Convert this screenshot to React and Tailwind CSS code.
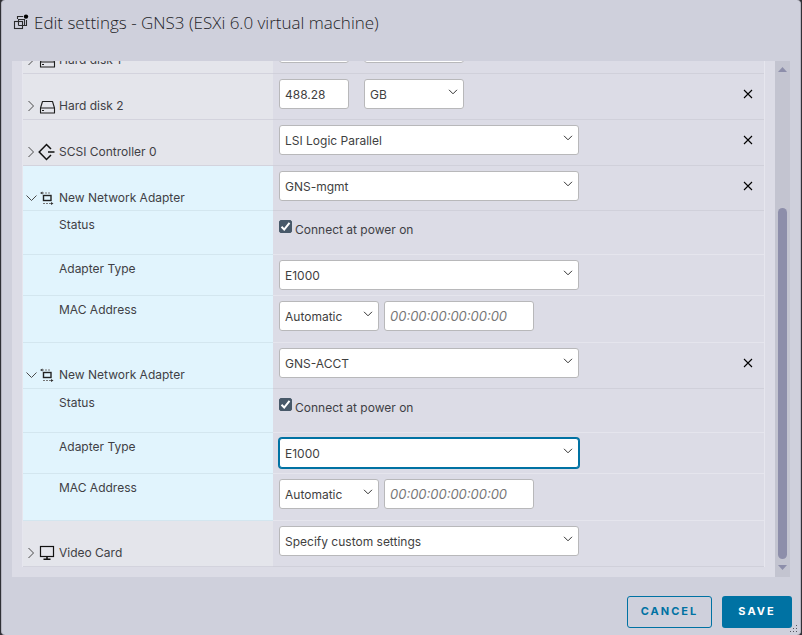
import React, { useState } from "react";

function Chevron({ className }) {
  return (
    <svg className={className} width="10" height="6" viewBox="0 0 10 6" fill="none" stroke="currentColor" strokeWidth="1">
      <path d="M1 0.8 L5 4.8 L9 0.8" />
    </svg>
  );
}

function Caret({ open }) {
  return (
    <svg width="12" height="12" viewBox="0 0 12 12" fill="none" stroke="#4a4a4a" strokeWidth="1">
      <path d={open ? "M0.5 3.5 L5.5 8.5 L10.5 3.5" : "M2.5 1 L7.5 6 L2.5 11"} />
    </svg>
  );
}

function DiskIcon() {
  return (
    <svg width="18" height="16" viewBox="0 0 18 16" fill="none" stroke="#1d1d1d" strokeWidth="1.1">
      <path d="M2.5 10 L4.5 3.5 H14.5 L16.5 10 V15 H2.5 Z M2.5 10 H16.5 M4 12.5 H6" strokeLinejoin="round" />
    </svg>
  );
}

function ScsiIcon() {
  return (
    <svg width="18" height="18" viewBox="0 0 18 18" fill="none" stroke="#111" strokeWidth="1.5">
      <path d="M13 6 L8.5 1.5 L1.2 9 L8.5 16.5 L13 12" />
      <path d="M10 9 H16.5" />
    </svg>
  );
}

function NetworkIcon() {
  return (
    <svg width="16" height="14" viewBox="0 0 16 14" fill="none" stroke="#222" strokeWidth="1">
      <rect x="4.5" y="4.5" width="7.5" height="5" strokeWidth="1.4" />
      <path d="M3 2 H5 M6 2 H8 M9 2 H11" stroke="#777" />
      <path d="M4 12.5 H6 M7 12.5 H9 M10 12.5 H13" stroke="#777" />
      <path d="M3.5 0.5 L1 2 L3.5 3.5 Z M12 11 L14.5 12.5 L12 14 Z" fill="#333" stroke="none" />
    </svg>
  );
}

function MonitorIcon() {
  return (
    <svg width="16" height="16" viewBox="0 0 16 16" fill="none" stroke="#111" strokeWidth="1.2">
      <rect x="1.5" y="1.5" width="13" height="10" />
      <path d="M8 11.5 V14 M4.5 14.3 H11.5" strokeWidth="1.6" />
    </svg>
  );
}

function VmIcon() {
  return (
    <svg width="16" height="16" viewBox="0 0 16 16" fill="none" stroke="#2b2b2b" strokeWidth="1.1">
      <path d="M4.5 5 V2.5 H10 M13.5 6 V11.5 H10" />
      <rect x="1.5" y="7.5" width="8" height="7" />
      <path d="M5.5 11.5 V5.5 H11.5 V11.5 H5.5" />
      <circle cx="13" cy="2.6" r="2.2" fill="#000" stroke="none" />
    </svg>
  );
}

function Select({ label, value, options = [], width, focused }) {
  return (
    <div className={`relative max-w-full ${width}`}>
      <select
        aria-label={label}
        defaultValue={value}
        className={`block h-[30px] w-full appearance-none rounded-[3px] border bg-white pt-px pl-[5px] pr-6 text-[#3f3f3f] outline-none ${
          focused ? "border-[#0072a3] ring-1 ring-[#0072a3]" : "border-[#b8b8ba]"
        }`}
      >
        <option>{value}</option>
        {options.map((o) => (
          <option key={o}>{o}</option>
        ))}
      </select>
      <Chevron className="pointer-events-none absolute right-[6px] top-[10px] text-[#333]" />
    </div>
  );
}

const inputStyle = "h-[30px] rounded-[3px] border border-[#b8b8ba] bg-white px-[5px] text-[#3f3f3f] outline-none";

function Row({ height, icon, label, open, active, child, removable, children }) {
  return (
    <div className={`flex ${height}`}>
      <div
        className={`flex w-[250px] shrink-0 items-start border-b ${
          active ? "border-[#d3e6ef] bg-[#e1f4fd]" : "border-[#d3d3dd] bg-[#e4e5eb]"
        } ${child ? "pt-[5px] pl-9" : "pt-[23px] pl-[3px]"}`}
      >
        {child ? (
          <span className="leading-[17px]">{label}</span>
        ) : (
          <button type="button" aria-expanded={!!open} className="flex h-[17px] items-center text-left leading-[17px]">
            <Caret open={open} />
            <span className="mr-[3px] flex w-[18px] items-center justify-center">{icon}</span>
            <span>{label}</span>
          </button>
        )}
      </div>
      <div
        className={`flex min-w-0 flex-1 items-start gap-[5px] border-b pt-[5px] pl-[6px] pr-[11px] ${
          child ? "border-[#e5e5ed]" : "border-[#d0d0da]"
        }`}
      >
        {children}
        {removable && (
          <button type="button" aria-label={`Remove ${label}`} className="mt-[10px] ml-auto text-black">
            <svg className="block" width="10" height="10" viewBox="0 0 10 10" stroke="currentColor" strokeWidth="1.1">
              <path d="M1 1 L9 9 M9 1 L1 9" />
            </svg>
          </button>
        )}
      </div>
    </div>
  );
}

function DiskRow({ label, size }) {
  return (
    <Row height="h-[46px]" icon={<DiskIcon />} label={label} removable>
      <input aria-label={`${label} size`} defaultValue={size} className={`mr-[10px] w-[70px] ${inputStyle}`} />
      <Select label={`${label} unit`} value="GB" options={["MB", "TB"]} width="w-[100px]" />
    </Row>
  );
}

function AdapterRows({ network, focused, tall }) {
  const [connected, setConnected] = useState(true);
  return (
    <>
      <Row height={tall ? "h-[46px]" : "h-[45px]"} icon={<NetworkIcon />} label="New Network Adapter" open active removable>
        <Select label="Network" value={network} width="w-[300px]" />
      </Row>
      <Row height="h-[44px]" label="Status" active child>
        <label className="mt-1 flex items-start gap-[3px]">
          <span className="relative block size-[13px]">
            <input
              type="checkbox"
              checked={connected}
              onChange={(e) => setConnected(e.target.checked)}
              className="peer block size-[13px] appearance-none rounded-[2px] border border-[#485969] checked:bg-[#485969]"
            />
            <svg className="pointer-events-none absolute inset-0 hidden peer-checked:block" width="13" height="13" viewBox="0 0 13 13" fill="none" stroke="#fff" strokeWidth="2">
              <path d="M2.5 6.8 L5.2 9.5 L10.5 2.8" />
            </svg>
          </span>
          <span className="mt-px leading-[17px]">Connect at power on</span>
        </label>
      </Row>
      <Row height="h-[41px]" label="Adapter Type" active child>
        <Select label="Adapter Type" value="E1000" options={["E1000e", "VMXNET 3"]} width="w-[300px]" focused={focused} />
      </Row>
      <Row height="h-[47px]" label="MAC Address" active child>
        <Select label="MAC Address mode" value="Automatic" options={["Manual"]} width="w-[100px]" />
        <input
          aria-label="MAC Address"
          placeholder="00:00:00:00:00:00"
          className={`w-[150px] text-[13px] placeholder:italic placeholder:text-[#777] ${inputStyle}`}
        />
      </Row>
    </>
  );
}

export default function App() {
  return (
    <div className="min-h-screen bg-[#303036] px-px font-['Inter',sans-serif] text-[12px] text-[#3f3f45]">
      <div className="relative flex min-h-screen flex-col rounded-[4px] border-x border-[#b4b4c0] bg-[#cfd0dc]">
        <header className="flex h-[61px] items-start gap-[5px] pt-[11px] pl-[11px]">
          <span className="mt-[3px]">
            <VmIcon />
          </span>
          <h1 className="font-['Open_Sans',sans-serif] text-[17px] leading-6 font-light text-[#242428]">
            Edit settings - GNS3 (ESXi 6.0 virtual machine)
          </h1>
        </header>

        <main className="mr-[10px] ml-[10px] flex flex-1 overflow-hidden bg-[#dcdce6]">
          <div className="-mt-[33px] mb-[10px] ml-[10px] mr-[10px] min-w-0 flex-1 border-x border-[#e6e6ee]">
            <DiskRow label="Hard disk 1" size="16" />
            <DiskRow label="Hard disk 2" size="488.28" />
            <Row height="h-[46px]" icon={<ScsiIcon />} label="SCSI Controller 0" removable>
              <Select label="SCSI Controller type" value="LSI Logic Parallel" width="w-[300px]" />
            </Row>
            <AdapterRows network="GNS-mgmt" />
            <AdapterRows network="GNS-ACCT" focused tall />
            <Row height="h-[46px]" icon={<MonitorIcon />} label="Video Card">
              <Select label="Video Card" value="Specify custom settings" width="w-[300px]" />
            </Row>
          </div>
          <div className="flex w-[15px] flex-col items-center bg-[#c3c4d0] pt-[6px] pb-[7px]">
            <svg width="9" height="5" viewBox="0 0 9 5" fill="#8d8eaa">
              <path d="M0 5 L4.5 0 L9 5 Z" />
            </svg>
            <div className="flex w-[9px] flex-1 flex-col justify-end py-[6px]">
              <div className="h-[73%] rounded-full bg-[#8d8eaa]" />
            </div>
            <svg width="9" height="5" viewBox="0 0 9 5" fill="#8d8eaa">
              <path d="M0 0 L4.5 5 L9 0 Z" />
            </svg>
          </div>
        </main>

        <footer className="flex justify-end gap-[10px] pt-[19px] pr-2 pb-[7px] text-[11px] font-bold tracking-[2px]">
          <button type="button" className="h-8 w-[85px] rounded-[3px] border border-[#0072a3] pb-0.5 text-[#0072a3]">
            CANCEL
          </button>
          <button type="button" className="h-8 w-[70px] rounded-[3px] bg-[#0072a3] pb-0.5 text-white">
            SAVE
          </button>
        </footer>
        <svg className="absolute right-[2px] bottom-[2px]" width="8" height="8" viewBox="0 0 8 8" fill="#55555f">
          <path d="M6 0h1v1h-1z M3 3h1v1h-1z M6 3h1v1h-1z M0 6h1v1h-1z M3 6h1v1h-1z M6 6h1v1h-1z" />
        </svg>
      </div>
    </div>
  );
}
